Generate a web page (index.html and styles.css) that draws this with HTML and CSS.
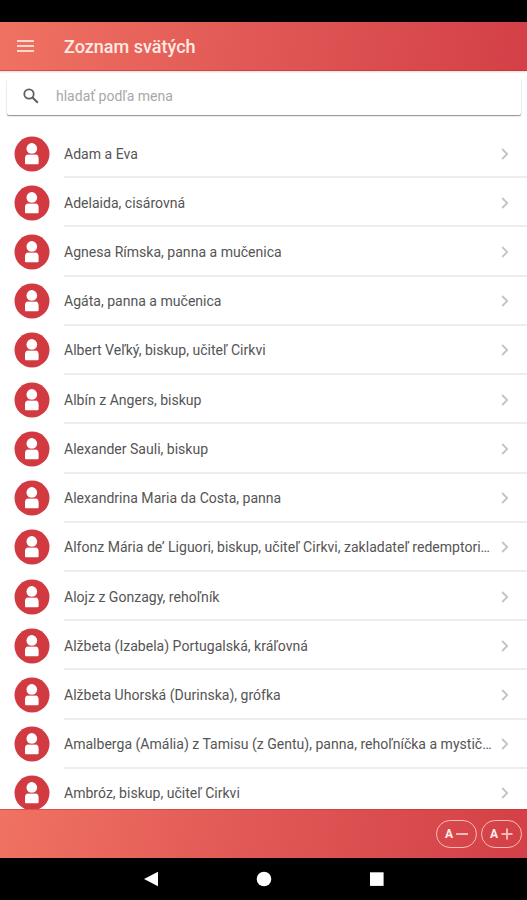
FILE: index.html
```html
<!DOCTYPE html>
<html lang="sk">
<head>
    <meta charset="UTF-8">
    <meta name="viewport" content="width=device-width, initial-scale=1.0">
    <title>Zoznam svätých</title>
    <link rel="stylesheet" href="styles.css">
</head>
<body>
    <!-- Shared icons -->
    <svg class="sprite" aria-hidden="true">
        <symbol id="saint" viewBox="0 0 36 36">
            <circle cx="18" cy="18" r="17.5" fill="#d23a41"/>
            <circle cx="17.8" cy="12.4" r="5.3" fill="#fff"/>
            <path d="M11 27v-4.7c0-2.4 1.6-4 3.6-4h6.4c2 0 3.6 1.6 3.6 4V27c0 .8-.5 1.3-1.3 1.3h-11c-.8 0-1.3-.5-1.3-1.3z" fill="#fff"/>
            <path d="M13.2 18.3h9.2" stroke="#d8656a" stroke-width=".9"/>
        </symbol>
        <symbol id="chevron" viewBox="0 0 8 12">
            <path d="M1.2 1l5 5-5 5" fill="none" stroke="#c4c4c4" stroke-width="1.8"/>
        </symbol>
    </svg>

    <div class="status-bar"></div>

    <header class="toolbar">
        <svg class="menu-icon" viewBox="0 0 17 12">
            <path d="M0 1h17M0 6h17M0 11h17" stroke="#ffd9d0" stroke-width="2"/>
        </svg>
        <h1>Zoznam svätých</h1>
    </header>

    <main class="content">
        <div class="searchbar">
            <svg class="search-icon" viewBox="0 0 16 16">
                <circle cx="6" cy="6" r="4.7" fill="none" stroke="#606060" stroke-width="1.8"/>
                <path d="M9.5 9.5l5.3 5.3" stroke="#606060" stroke-width="2.1"/>
            </svg>
            <input type="text" placeholder="hladať podľa mena">
        </div>

        <ul class="list">
            <li><svg class="avatar"><use href="#saint"/></svg><div class="item"><span>Adam a Eva</span><svg class="chevron"><use href="#chevron"/></svg></div></li>
            <li><svg class="avatar"><use href="#saint"/></svg><div class="item"><span>Adelaida, cisárovná</span><svg class="chevron"><use href="#chevron"/></svg></div></li>
            <li><svg class="avatar"><use href="#saint"/></svg><div class="item"><span>Agnesa Rímska, panna a mučenica</span><svg class="chevron"><use href="#chevron"/></svg></div></li>
            <li><svg class="avatar"><use href="#saint"/></svg><div class="item"><span>Agáta, panna a mučenica</span><svg class="chevron"><use href="#chevron"/></svg></div></li>
            <li><svg class="avatar"><use href="#saint"/></svg><div class="item"><span>Albert Veľký, biskup, učiteľ Cirkvi</span><svg class="chevron"><use href="#chevron"/></svg></div></li>
            <li><svg class="avatar"><use href="#saint"/></svg><div class="item"><span>Albín z Angers, biskup</span><svg class="chevron"><use href="#chevron"/></svg></div></li>
            <li><svg class="avatar"><use href="#saint"/></svg><div class="item"><span>Alexander Sauli, biskup</span><svg class="chevron"><use href="#chevron"/></svg></div></li>
            <li><svg class="avatar"><use href="#saint"/></svg><div class="item"><span>Alexandrina Maria da Costa, panna</span><svg class="chevron"><use href="#chevron"/></svg></div></li>
            <li><svg class="avatar"><use href="#saint"/></svg><div class="item"><span>Alfonz Mária de’ Liguori, biskup, učiteľ Cirkvi, zakladateľ redemptori…</span><svg class="chevron"><use href="#chevron"/></svg></div></li>
            <li><svg class="avatar"><use href="#saint"/></svg><div class="item"><span>Alojz z Gonzagy, rehoľník</span><svg class="chevron"><use href="#chevron"/></svg></div></li>
            <li><svg class="avatar"><use href="#saint"/></svg><div class="item"><span>Alžbeta (Izabela) Portugalská, kráľovná</span><svg class="chevron"><use href="#chevron"/></svg></div></li>
            <li><svg class="avatar"><use href="#saint"/></svg><div class="item"><span>Alžbeta Uhorská (Durinska), grófka</span><svg class="chevron"><use href="#chevron"/></svg></div></li>
            <li><svg class="avatar"><use href="#saint"/></svg><div class="item"><span>Amalberga (Amália) z Tamisu (z Gentu), panna, rehoľníčka a mystič…</span><svg class="chevron"><use href="#chevron"/></svg></div></li>
            <li><svg class="avatar"><use href="#saint"/></svg><div class="item"><span>Ambróz, biskup, učiteľ Cirkvi</span><svg class="chevron"><use href="#chevron"/></svg></div></li>
        </ul>
    </main>

    <footer class="footer">
        <button class="font-button">A<svg viewBox="0 0 12 12"><path d="M0 6h12" stroke="#f7b9b3" stroke-width="2"/></svg></button>
        <button class="font-button">A<svg viewBox="0 0 12 12"><path d="M.5 6h11M6 .5v11" stroke="#f7b9b3" stroke-width="2"/></svg></button>
    </footer>

    <nav class="nav-bar">
        <svg viewBox="0 0 16 16"><path d="M1 8L15 .8v14.4z" fill="#fff"/></svg>
        <svg viewBox="0 0 16 16"><circle cx="8" cy="8" r="7.3" fill="#fff"/></svg>
        <svg viewBox="0 0 16 16"><path d="M1 1.3h13.6v13.6H1z" fill="#fff"/></svg>
    </nav>
</body>
</html>
```
FILE: styles.css
```css
* {
    box-sizing: border-box;
}

body {
    margin: 0;
    height: 900px;
    display: flex;
    flex-direction: column;
    overflow: hidden;
    background-color: #fff;
    font-family: Roboto, "Liberation Sans", sans-serif;
}

.sprite {
    position: absolute;
    width: 0;
    height: 0;
}

.status-bar {
    flex: none;
    height: 22px;
    background-color: #000;
}

.toolbar {
    flex: none;
    height: 49px;
    display: flex;
    align-items: center;
    padding-left: 17px;
    background: linear-gradient(100deg, #f07262 0%, #e05755 50%, #d34047 100%);
    border-bottom: 1px solid rgba(200, 40, 45, 0.5);
    box-shadow: 0 1px 2px rgba(0, 0, 0, 0.15);
}

.menu-icon {
    width: 17px;
    height: 12px;
    margin-right: 30px;
}

h1 {
    margin: 0;
    font-size: 18px;
    font-weight: 500;
    color: #ffebe4;
}

.content {
    flex: 1;
    min-height: 0;
    overflow: hidden;
}

.searchbar {
    display: flex;
    align-items: center;
    height: 36px;
    margin: 8px 6px 0 7px;
    padding: 0 16px 2px;
    border-radius: 2px;
    box-shadow: 0 1px 1px rgba(0, 0, 0, 0.35), 0 1px 2px rgba(0, 0, 0, 0.15);
}

.search-icon {
    width: 16px;
    height: 16px;
    margin-right: 17px;
}

.searchbar input {
    flex: 1;
    padding: 0;
    border: none;
    outline: none;
    background: none;
    font-family: inherit;
    font-size: 14px;
}

.searchbar input::placeholder {
    color: #a8a8a8;
}

.list {
    list-style: none;
    margin: 14px 0 0;
    padding: 0;
}

.list li {
    display: flex;
    align-items: center;
    height: 49.23px;
    padding-left: 14px;
}

.avatar {
    flex: none;
    width: 36px;
    height: 36px;
    margin-right: 14px;
}

.item {
    flex: 1;
    align-self: stretch;
    display: flex;
    align-items: center;
    justify-content: space-between;
    padding-top: 2px;
    padding-right: 18px;
    border-bottom: 2px solid #ededed;
    font-size: 14.06px;
    color: #555;
    white-space: nowrap;
}

.chevron {
    flex: none;
    width: 8px;
    height: 12px;
}

.footer {
    flex: none;
    height: 49px;
    display: flex;
    align-items: center;
    justify-content: flex-end;
    gap: 4px;
    padding-right: 5px;
    background: linear-gradient(100deg, #f07262 0%, #e05755 50%, #d34047 100%);
    border-top: 1px solid rgba(200, 40, 45, 0.4);
}

.font-button {
    display: flex;
    align-items: center;
    justify-content: center;
    gap: 3px;
    width: 41px;
    height: 28px;
    padding: 0;
    border: 1px solid #f7bdb5;
    border-radius: 14px;
    background: none;
    font-family: inherit;
    font-size: 12px;
    font-weight: 700;
    color: #fff0ec;
}

.font-button svg {
    width: 12px;
    height: 12px;
}

.nav-bar {
    flex: none;
    height: 42px;
    display: flex;
    align-items: center;
    justify-content: center;
    gap: 97px;
    background-color: #000;
}

.nav-bar svg {
    width: 16px;
    height: 16px;
}
```
